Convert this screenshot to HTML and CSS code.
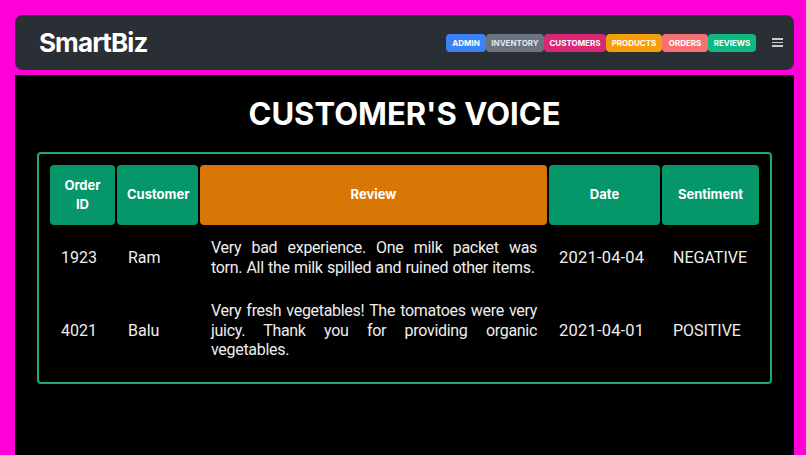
FILE: index.html
```html
<!DOCTYPE html>
<html>
<head>
<meta charset="utf-8">
<link rel="stylesheet" href="styles.css">
</head>
<body>
<nav class="navbar">
  <div class="brand">SmartBiz</div>
  <div class="nav-right">
    <div class="pills">
      <span class="pill pill-admin">ADMIN</span>
      <span class="pill pill-inventory">INVENTORY</span>
      <span class="pill pill-customers">CUSTOMERS</span>
      <span class="pill pill-products">PRODUCTS</span>
      <span class="pill pill-orders">ORDERS</span>
      <span class="pill pill-reviews">REVIEWS</span>
    </div>
    <div class="hamburger"><span></span><span></span><span></span></div>
  </div>
</nav>
<main class="main">
  <h1 class="title">CUSTOMER'S VOICE</h1>
  <div class="table-box">
    <table class="reviews">
      <thead>
        <tr>
          <th class="c-id">Order ID</th>
          <th class="c-cust">Customer</th>
          <th class="c-review">Review</th>
          <th class="c-date">Date</th>
          <th class="c-sent">Sentiment</th>
        </tr>
      </thead>
      <tbody>
        <tr>
          <td>1923</td>
          <td>Ram</td>
          <td class="review-text"><span class="line-fill">Very bad experience. One milk packet was</span> torn. All the milk spilled and ruined other items.</td>
          <td class="date">2021-04-04</td>
          <td>NEGATIVE</td>
        </tr>
        <tr>
          <td>4021</td>
          <td>Balu</td>
          <td class="review-text">Very fresh vegetables! The tomatoes were very juicy. Thank you for providing organic vegetables.</td>
          <td class="date">2021-04-01</td>
          <td>POSITIVE</td>
        </tr>
      </tbody>
    </table>
  </div>
</main>
</body>
</html>
```
FILE: styles.css
```css
* { box-sizing: border-box; }
html, body { height: 100%; }
body {
  margin: 0;
  padding: 15px 12px 0 15px;
  background: #ff00d6;
  font-family: Inter, "Noto Sans", sans-serif;
  color: #fff;
  display: flex;
  flex-direction: column;
}
.navbar {
  height: 55px;
  background: #2a2e35;
  border-radius: 8px;
  display: flex;
  align-items: center;
  justify-content: space-between;
  padding: 0 11px 0 24px;
  margin-bottom: 5px;
  flex-shrink: 0;
}
.brand {
  font-size: 26px;
  font-weight: 700;
  letter-spacing: -0.9px;
  color: #fff;
}
.nav-right {
  display: flex;
  align-items: center;
  gap: 16px;
}
.pills { display: flex; }
.pill {
  height: 18px;
  display: flex;
  align-items: center;
  justify-content: center;
  font-size: 8px;
  font-weight: 700;
  color: #fff;
  border-radius: 4px;
  padding: 0;
}
.pill-admin { background: #3b82f6; width: 40px; }
.pill-inventory { background: #6b7280; width: 58px; color: #e5e7eb; }
.pill-customers { background: #db2777; width: 62px; }
.pill-products { background: #f59e0b; width: 56px; }
.pill-orders { background: #f87171; width: 46px; }
.pill-reviews { background: #10b981; width: 48px; }
.hamburger {
  width: 11px;
  display: flex;
  flex-direction: column;
  gap: 2px;
}
.hamburger span {
  display: block;
  height: 1.7px;
  background: #c9ccd1;
}
.main {
  flex: 1;
  background: #000;
  padding: 20px 22px 20px 22px;
}
.title {
  margin: 0 0 20px 0;
  text-align: center;
  font-size: 31px;
  line-height: 37px;
  font-weight: 700;
  letter-spacing: 0;
}
.table-box {
  border: 2px solid #1aa878;
  border-radius: 4px;
  padding: 9px;
}
.reviews {
  width: 100%;
  table-layout: fixed;
  border-collapse: separate;
  border-spacing: 2px;
}
.reviews th {
  background: #059669;
  color: #fff;
  font-size: 13px;
  font-weight: 700;
  line-height: 19.5px;
  padding: 10.5px 10px;
  text-align: center;
  border-radius: 4px;
}
.reviews th.c-review { background: #d97706; }
.c-id { width: 65px; }
.c-cust { width: 81px; }
.c-review { width: 347px; }
.c-date { width: 111px; }
.c-sent { width: 97px; }
.reviews td {
  font-family: Roboto, Inter, sans-serif;
  font-size: 16px;
  line-height: 19.5px;
  padding: 11px 10px 11px 11px;
  color: #eee;
  vertical-align: middle;
  text-align: left;
}
.reviews td.date { font-size: 16.5px; letter-spacing: 0.2px; padding-left: 10px; }
.reviews td.review-text {
  text-align: justify;
  letter-spacing: -0.3px;
  word-spacing: 0.6px;
}
.line-fill {
  display: block;
  text-align-last: justify;
}
```
